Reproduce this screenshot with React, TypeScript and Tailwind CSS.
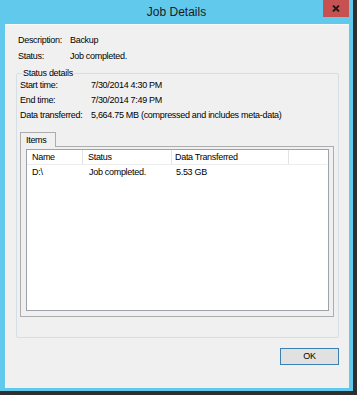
import React from "react";

const font = { fontFamily: '"Liberation Sans", Arial, sans-serif' };

function Row({ label, value, labelW }: { label: string; value: string; labelW: string }) {
  return (
    <div className="flex h-[15px] items-center leading-[15px]">
      <span className={labelW}>{label}</span>
      <span>{value}</span>
    </div>
  );
}

export default function App() {
  return (
    <div className="w-[357px] h-[395px] bg-[#2f2f2f] overflow-hidden" style={font}>
      <div className="relative w-[353px] h-[391px] bg-[#61c9eb] pl-[5px] pr-[4px] pb-[3px] flex flex-col">
        {/* title bar */}
        <div className="h-[24px] shrink-0 flex items-center justify-center text-[12px] text-[#1b1b1b] -ml-[5px] -mr-[4px]">
          Job Details
        </div>
        <div className="absolute right-[4px] top-0 w-[26px] h-[17px] bg-[#c75050] flex items-center justify-center">
          <svg width="8" height="7" viewBox="0 0 8 7">
            <path d="M1 0.5 L7 6.5 M7 0.5 L1 6.5" stroke="#1a1a1a" strokeWidth="1.8" />
          </svg>
        </div>
        {/* content */}
        <div className="flex-1 bg-[#f0f0f0] border-l border-t border-[#f8f8f8] flex flex-col text-[9px] tracking-[-0.3px] text-black">
          <div className="pt-[8px] pl-[12px]">
            <div className="flex h-[16px] items-center">
              <span className="w-[52px]">Description:</span>
              <span>Backup</span>
            </div>
            <div className="flex h-[16px] items-center">
              <span className="w-[52px]">Status:</span>
              <span>Job completed.</span>
            </div>
          </div>
          {/* group box */}
          <div className="relative mt-[8px] ml-[10px] mr-[10px] h-[265px] border border-[#d5dfe5] rounded-[2px] pt-[4px] pl-[3px] pr-[4px] flex flex-col">
            <span className="absolute -top-[7px] left-[5px] px-[1px] bg-[#f0f0f0] leading-[12px]">Status details</span>
            <Row label="Start time:" value="7/30/2014 4:30 PM" labelW="w-[71px]" />
            <Row label="End time:" value="7/30/2014 7:49 PM" labelW="w-[71px]" />
            <Row label="Data transferred:" value="5,664.75 MB (compressed and includes meta-data)" labelW="w-[71px]" />
            {/* tabs */}
            <div className="mt-[9px] flex">
              <div className="relative z-10 w-[36px] h-[15px] -mb-[1px] border border-b-0 border-[#adadad] bg-[#f0f0f0] pl-[5px] leading-[14px]">
                Items
              </div>
            </div>
            <div className="h-[171px] border border-[#adadad] pt-[2px] pl-[5px] pr-[4px] pb-[5px]">
              <div className="h-full bg-white border border-[#9ea3aa] flex flex-col">
                <div className="flex h-[15px] leading-[15px] border-b border-[#ececec] mr-[1px]">
                  <div className="w-[56px] pl-[5px] border-r border-[#e3e3e3]">Name</div>
                  <div className="w-[89px] pl-[5px] border-r border-[#e3e3e3]">Status</div>
                  <div className="w-[117px] pl-[3px] border-r border-[#e3e3e3]">Data Transferred</div>
                  <div className="flex-1" />
                </div>
                <div className="flex h-[15px] leading-[15px]">
                  <div className="w-[56px] pl-[5px]">D:\</div>
                  <div className="w-[89px] pl-[6px]">Job completed.</div>
                  <div className="w-[117px] pl-[4px]">5.53 GB</div>
                </div>
              </div>
            </div>
          </div>
          <div className="mt-[10px] mr-[10px] flex justify-end">
            <button className="w-[59px] h-[17px] bg-[#e1e1e1] border border-[#3c7fb1] text-[9px] leading-[15px] text-black">
              OK
            </button>
          </div>
        </div>
      </div>
    </div>
  );
}
